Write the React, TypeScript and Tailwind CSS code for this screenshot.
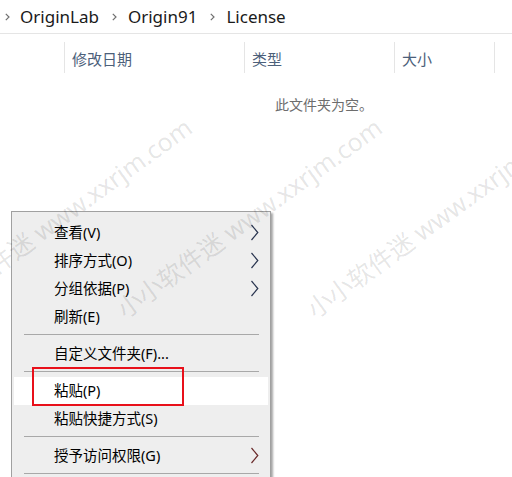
import React from "react";

const FONT = { fontFamily: '"Segoe UI", "Noto Sans", "Noto Sans CJK SC", sans-serif' };

function Crumb() {
  return (
    <svg width="5" height="8" viewBox="0 0 5 8" className="shrink-0">
      <path d="M0.8 0.8 L4 4 L0.8 7.2" fill="none" stroke="#707070" strokeWidth="1.2" />
    </svg>
  );
}

function Chevron({ color = "#333" }: { color?: string }) {
  return (
    <svg width="9" height="17" viewBox="0 0 9 17" className="absolute left-[236px] top-[5px]">
      <path d="M1.5 1 L7.8 8.5 L1.5 16" fill="none" stroke={color} strokeWidth="1.2" />
    </svg>
  );
}

function Item({ label, sub, highlight, chevColor }: { label: string; sub?: boolean; highlight?: boolean; chevColor?: string }) {
  return (
    <div
      className={
        "relative mx-[2px] h-[28px] flex items-center pl-[40px] text-[14.5px] text-black " +
        (highlight ? "bg-white" : "")
      }
    >
      {label}
      {sub && <Chevron color={chevColor} />}
    </div>
  );
}

function Sep() {
  return (
    <div className="h-[9px] pt-[3px] ml-[12px] mr-[11px]">
      <div className="h-px bg-[#a8a8a8]" />
    </div>
  );
}

function Watermark({ pos }: { pos: string }) {
  return (
    <span
      className={
        "absolute whitespace-nowrap text-[25px] leading-none origin-bottom-left -rotate-[36deg] text-[rgba(0,0,0,0.11)] " +
        pos
      }
    >
      小小软件迷 www.xxrjm.com
    </span>
  );
}

export default function App() {
  return (
    <div className="relative w-[512px] h-[477px] overflow-hidden bg-white" style={FONT}>
      {/* breadcrumb */}
      <div className="h-[34px] flex items-center pl-[5px] text-[17px] text-[#1a1a1a] border-b border-[#e5e5e5]">
        <Crumb />
        <span className="ml-[10px]">OriginLab</span>
        <span className="ml-[13px] flex"><Crumb /></span>
        <span className="ml-[11px]">Origin91</span>
        <span className="ml-[13px] flex"><Crumb /></span>
        <span className="ml-[11px]">License</span>
      </div>

      {/* column headers */}
      <div className="mt-[8px] h-[31px] flex text-[15px] text-[#4c607a]">
        <div className="w-[64px]" />
        <div className="w-[180px] border-l border-[#e5e5e5] pl-[7px] pt-[3px] flex items-center">修改日期</div>
        <div className="w-[150px] border-l border-[#e5e5e5] pl-[7px] pt-[3px] flex items-center">类型</div>
        <div className="w-[100px] border-l border-[#e5e5e5] pl-[7px] pt-[3px] flex items-center">大小</div>
        <div className="border-l border-[#e5e5e5]" />
      </div>

      <div className="mt-[21px] pl-[275px] text-[14px] text-[#6d6d6d]">此文件夹为空。</div>

      {/* context menu */}
      <div className="absolute left-[11px] top-[211px] w-[260px] h-[300px] bg-[#eeeeee] border border-[#a0a0a0] shadow-[2px_2px_2px_rgba(0,0,0,0.35)] pt-[7px]">
        <Item label="查看(V)" sub chevColor="#2a3550" />
        <Item label="排序方式(O)" sub chevColor="#2a3550" />
        <Item label="分组依据(P)" sub chevColor="#2a3550" />
        <Item label="刷新(E)" />
        <Sep />
        <Item label="自定义文件夹(F)..." />
        <Sep />
        <Item label="粘贴(P)" highlight />
        <Item label="粘贴快捷方式(S)" />
        <Sep />
        <Item label="授予访问权限(G)" sub chevColor="#6a2a2a" />
        <Sep />
      </div>

      {/* red annotation box */}
      <div className="absolute left-[32px] top-[367px] w-[152px] h-[39px] border-2 border-[#e8101a]" />

      {/* watermarks */}
      <Watermark pos="left-[-63px] top-[297px]" />
      <Watermark pos="left-[127px] top-[297px]" />
      <Watermark pos="left-[317px] top-[297px]" />
    </div>
  );
}
